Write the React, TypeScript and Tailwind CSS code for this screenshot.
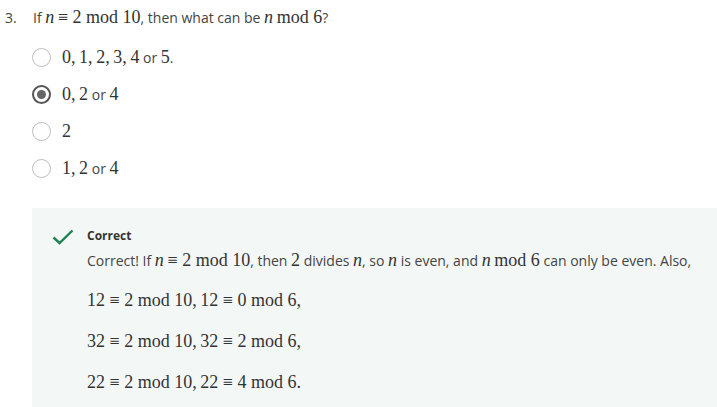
import React from 'react';

const sans = { fontFamily: '"Open Sans", "Noto Sans", sans-serif' };

// 수식 조각
const M = ({ children }: { children: React.ReactNode }) => (
  <span className="font-['Liberation_Serif',serif] text-[18px] text-[#333]">{children}</span>
);
const V = ({ children }: { children: React.ReactNode }) => (
  <span className="font-['Liberation_Serif',serif] italic text-[18px] text-[#333]">{children}</span>
);

const options: { label: React.ReactNode; selected?: boolean }[] = [
  { label: <><M>0,{'\u2009'}1,{'\u2009'}2,{'\u2009'}3,{'\u2009'}4</M> or <M>5</M>.</> },
  { label: <><M>0,{'\u2009'}2</M> or <M>4</M></>, selected: true },
  { label: <M>2</M> },
  { label: <><M>1,{'\u2009'}2</M> or <M>4</M></> },
];

const Radio = ({ selected }: { selected?: boolean }) =>
  selected ? (
    <span className="w-[19px] h-[19px] rounded-full border-[2.5px] border-[#555] flex items-center justify-center shrink-0">
      <span className="w-[9px] h-[9px] rounded-full bg-[#666]" />
    </span>
  ) : (
    <span className="w-[19px] h-[19px] rounded-full border-[1.5px] border-[#bdbdbd] shrink-0" />
  );

const Line = ({ a, b, c }: { a: string; b: string; c: string }) => (
  <M>
    {a} ≡ 2 mod 10,{'\u2009'}{a} ≡ {b} mod 6{c}
  </M>
);

export default function App() {
  return (
    <div className="w-[717px] h-[407px] bg-white overflow-hidden text-[14px] text-[#444]" style={sans}>
      <div className="flex items-center h-[34px] pl-[5px]">
        <span className="w-[28px]">3.</span>
        <span>
          If <V>n</V> <M>≡ 2 mod 10</M>, then what can be <V>n</V> <M>mod 6</M>?
        </span>
      </div>

      <div className="flex flex-col pl-[32px] mt-[5px]">
        {options.map((o, i) => (
          <div key={i} className="flex items-center gap-[11px] h-[37px]">
            <Radio selected={o.selected} />
            <span className="text-[#444]">{o.label}</span>
          </div>
        ))}
      </div>

      <div className="ml-[32px] mt-[21px] bg-[#f3f8f7] h-[200px] flex pt-[19px] pl-[20px]">
        <svg width="22" height="16" viewBox="0 0 22 16" className="shrink-0 mt-[2px]">
          <path d="M1.5 8.5 L7.5 14 L20.5 1.5" fill="none" stroke="#1f8354" strokeWidth="2.4" />
        </svg>
        <div className="ml-[13px]">
          <div className="text-[12px] font-bold text-[#333] leading-[18px]">Correct</div>
          <div className="mt-[4px] leading-[22px] text-[#444] whitespace-nowrap">
            Correct! If <V>n</V> <M>≡ 2 mod 10</M>, then <M>2</M> divides <V>n</V>, so <V>n</V> is even, and <V>n</V>{' '}
            <M>mod 6</M> can only be even. Also,
          </div>
          <div className="mt-[17px] leading-[22px]"><Line a="12" b="0" c="," /></div>
          <div className="mt-[18px] leading-[22px]"><Line a="32" b="2" c="," /></div>
          <div className="mt-[18px] leading-[22px]"><Line a="22" b="4" c="." /></div>
        </div>
      </div>
    </div>
  );
}
